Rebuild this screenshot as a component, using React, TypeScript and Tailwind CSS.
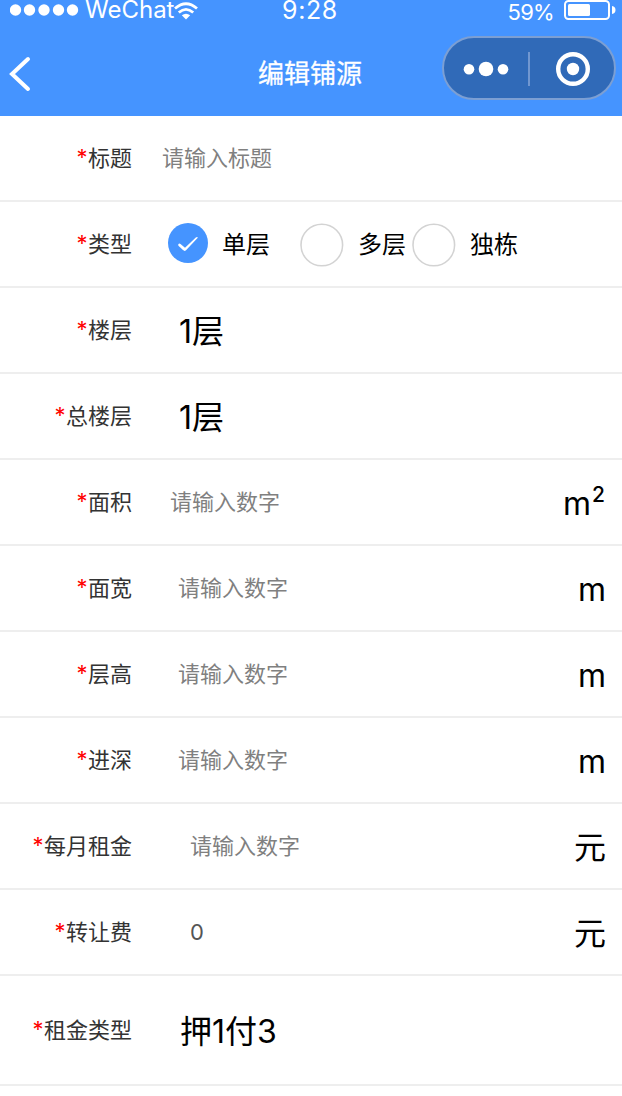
import React from "react";

type Row = {
  label: string;
  value?: string;
  placeholder?: string;
  unit?: string;
  indent?: string;
  height?: string;
};

const rows: Row[] = [
  { label: "楼层", value: "1层", indent: "pl-[47px]" },
  { label: "总楼层", value: "1层", indent: "pl-[47px]" },
  { label: "面积", placeholder: "请输入数字", unit: "m2", indent: "pl-[38px]" },
  { label: "面宽", placeholder: "请输入数字", unit: "m", indent: "pl-[46px]" },
  { label: "层高", placeholder: "请输入数字", unit: "m", indent: "pl-[46px]" },
  { label: "进深", placeholder: "请输入数字", unit: "m", indent: "pl-[46px]" },
  { label: "每月租金", placeholder: "请输入数字", unit: "元", indent: "pl-[58px]" },
  { label: "转让费", placeholder: "0", unit: "元", indent: "pl-[58px]" },
  { label: "租金类型", value: "押1付3", indent: "pl-[48px]", height: "h-[110px]" },
];

function Label({ text }: { text: string }) {
  return (
    <div className="flex w-[132px] shrink-0 justify-end text-[22px] leading-8 whitespace-nowrap text-[#333]">
      <span className="-mt-px mr-[0.5px] text-[#ff0000]">*</span>
      {text}
    </div>
  );
}

function FormRow({ label, height = "h-[86px]", children }: { label: string; height?: string; children: React.ReactNode }) {
  return (
    <div className={`flex shrink-0 items-center border-b-2 border-[#eee] ${height}`}>
      <Label text={label} />
      {children}
    </div>
  );
}

function Unit({ name }: { name: string }) {
  if (name === "m2") {
    return (
      <span className="mt-1 flex pr-px text-[32px] leading-10 text-black">
        m<sup className="top-0 ml-px -mt-[9px] text-[21px] leading-10 font-medium">2</sup>
      </span>
    );
  }
  return <span className="mt-1 text-[32px] leading-10 text-black">{name}</span>;
}

function StatusBar() {
  return (
    <div className="grid h-6 grid-cols-3">
      <div className="flex h-5 items-center pl-[10px]">
        <svg width="70" height="12" viewBox="0 0 70 12" fill="white">
          {[6, 20, 34.5, 49, 63].map((x) => (
            <circle key={x} cx={x - 0.5} cy="6" r="5.7" />
          ))}
        </svg>
        <span className="ml-[5px] text-[24px] leading-5">WeChat</span>
        <svg className="shrink-0" width="24" height="19" viewBox="0 0 24 19" fill="none" stroke="white" strokeWidth="2.8">
          <path d="M1 7.5Q12 -2 23 7.5" />
          <path d="M4.8 11.5Q12 5.2 19.2 11.5" />
          <path d="M12 18.5L7.8 14.3Q12 11 16.2 14.3Z" fill="white" stroke="none" />
        </svg>
      </div>
      <div className="pr-0.5 text-center text-[25px] leading-5 tracking-[0.6px]">9:28</div>
      <div className="flex items-start justify-end pr-[6px]">
        <span className="mt-0.5 mr-[10px] text-[22px] leading-5 tracking-[-0.7px]">59%</span>
        <svg width="52" height="20" viewBox="0 0 52 20">
          <rect x="1" y="1" width="44" height="18" rx="3.5" fill="none" stroke="white" strokeWidth="2" />
          <rect x="4" y="4" width="22" height="12" rx="1.5" fill="white" />
          <path d="M48 6Q51.5 6.5 51.5 10Q51.5 13.5 48 14Z" fill="white" />
        </svg>
      </div>
    </div>
  );
}

function NavBar() {
  return (
    <div className="grid h-[92px] grid-cols-[258px_104px_1fr]">
      <svg className="mt-8 ml-2" width="24" height="36" viewBox="0 0 24 36" fill="none" stroke="white" strokeWidth="4" strokeLinecap="round">
        <path d="M20 3L4 18L20 33" strokeLinejoin="miter" />
      </svg>
      <h1 className="mt-[30px] text-[26px] leading-10 whitespace-nowrap [-webkit-text-stroke:0.3px_white]">编辑铺源</h1>
      <div className="mt-3 mr-[6px] flex h-16 w-[174px] items-center justify-self-end rounded-full border-2 border-[#7c9fd3] bg-[#306ab8]">
        <svg className="mt-0.5 ml-[19px]" width="46" height="16" viewBox="0 0 46 16" fill="white">
          <circle cx="6" cy="8.3" r="5.3" />
          <circle cx="23" cy="8" r="7.3" />
          <circle cx="40" cy="8.3" r="5.3" />
        </svg>
        <div className="mt-0.5 ml-[19px] h-[34px] w-0.5 bg-[#7197d0]" />
        <svg className="mt-0.5 ml-[25px]" width="36" height="36" viewBox="0 0 36 36">
          <circle cx="18" cy="18" r="14.8" fill="none" stroke="white" strokeWidth="4.4" />
          <circle cx="18" cy="18" r="6.2" fill="white" />
        </svg>
      </div>
    </div>
  );
}

function EmptyRadio() {
  return (
    <svg className="mt-0.5 shrink-0" width="44" height="44" viewBox="0 0 44 44">
      <circle cx="21.8" cy="22" r="20.8" fill="none" stroke="#d3d3d3" strokeWidth="1.6" />
    </svg>
  );
}

export default function App() {
  return (
    <div className="flex h-[1096px] w-[622px] flex-col overflow-hidden bg-white font-['Inter','Noto_Sans_CJK_SC',sans-serif]">
      <header className="h-[116px] shrink-0 bg-[#4594ff] text-white">
        <StatusBar />
        <NavBar />
      </header>
      <main>
        <FormRow label="标题">
          <span className="pl-[30px] text-[22px] leading-8 text-[#808080]">请输入标题</span>
        </FormRow>
        <FormRow label="类型">
          <div className="flex items-center text-[24px] leading-8 text-black">
            <span className="-mt-[3px] ml-9 flex size-10 items-center justify-center rounded-full bg-[#4594ff]">
              <svg className="mt-0.5" width="22" height="16" viewBox="0 0 22 16" fill="white">
                <path d="M1.2 8.4Q2.2 7 3.5 8L8 11.8L18.8 1.5Q20.4.2 20.8 1.7L9 14.3Q7.5 15.6 6 14.1L1.4 9.7Z" />
              </svg>
            </span>
            <span className="mt-px ml-[14px]">单层</span>
            <span className="ml-[30px] flex items-center">
              <EmptyRadio />
              <span className="mt-px ml-[14px]">多层</span>
            </span>
            <span className="ml-[6px] flex items-center">
              <EmptyRadio />
              <span className="mt-px ml-[14px]">独栋</span>
            </span>
          </div>
        </FormRow>
        {rows.map((row) => (
          <FormRow key={row.label} label={row.label} height={row.height}>
            <div className={`flex flex-1 items-center justify-between pr-4 ${row.indent}`}>
              {row.value ? (
                <span className="mt-1 text-[32px] leading-10 text-black">{row.value}</span>
              ) : (
                <span className={row.placeholder === "0" ? "text-[22px] leading-8 text-[#555]" : "text-[22px] leading-8 text-[#808080]"}>
                  {row.placeholder}
                </span>
              )}
              {row.unit && <Unit name={row.unit} />}
            </div>
          </FormRow>
        ))}
      </main>
    </div>
  );
}
